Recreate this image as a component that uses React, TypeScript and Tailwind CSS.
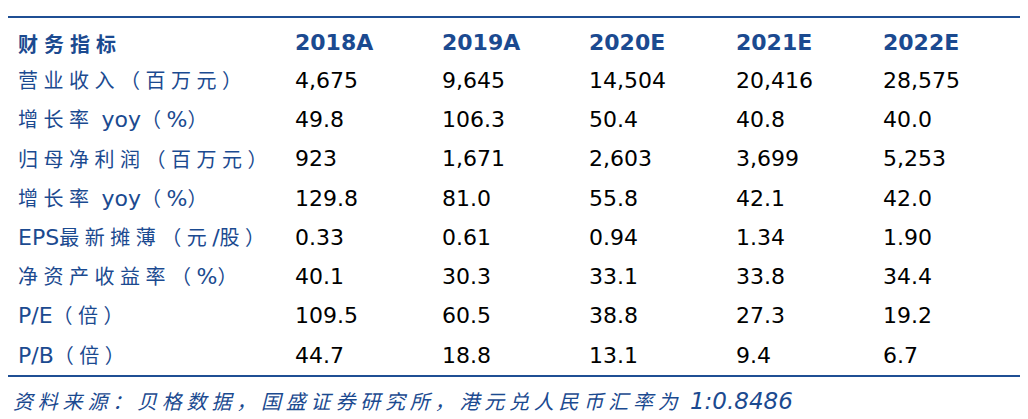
const HEAD = ["2018A", "2019A", "2020E", "2021E", "2022E"];

const ROWS: [string, string[]][] = [
  ["营业收入（百万元）", ["4,675", "9,645", "14,504", "20,416", "28,575"]],
  ["增长率 yoy（%）", ["49.8", "106.3", "50.4", "40.8", "40.0"]],
  ["归母净利润（百万元）", ["923", "1,671", "2,603", "3,699", "5,253"]],
  ["增长率 yoy（%）", ["129.8", "81.0", "55.8", "42.1", "42.0"]],
  ["EPS最新摊薄（元/股）", ["0.33", "0.61", "0.94", "1.34", "1.90"]],
  ["净资产收益率（%）", ["40.1", "30.3", "33.1", "33.8", "34.4"]],
  ["P/E（倍）", ["109.5", "60.5", "38.8", "27.3", "19.2"]],
  ["P/B（倍）", ["44.7", "18.8", "13.1", "9.4", "6.7"]],
];

const FONT = "[font-family:'DejaVu_Sans','Noto_Sans_CJK_SC',sans-serif]";

// CJK runs get wider spacing than latin runs, like the source document
function Label({ text, spacing, latin = "text-[22px]" }: { text: string; spacing: string; latin?: string }) {
  const parts = text.split(/([\u3000-\u9fff\uff00-\uffef]+)/).filter(Boolean);
  return (
    <>
      {parts.map((p, i) =>
        /[\u3000-\u9fff\uff00-\uffef]/.test(p) ? (
          <span key={i} className={`text-[20px] ${spacing} [font-family:'Noto_Sans_CJK_SC',sans-serif]`}>
            {p}
          </span>
        ) : (
          <span key={i} className={latin}>{p}</span>
        ),
      )}
    </>
  );
}

export default function App() {
  return (
    <div className={`h-[419px] w-[1028px] bg-white ${FONT}`}>
      <div className="ml-[8px] mt-[16px] w-[1012px] border-t-2 border-b-2 border-[#1f4f94]">
        {/* header */}
        <div className="grid h-[43px] grid-cols-[277px_147px_147px_147px_147px_147px] items-end pb-[2px] pl-[10px]">
          <div className="text-[20px] font-bold tracking-[6px] text-[#1b4a90] [font-family:'Noto_Sans_CJK_SC',sans-serif]">
            财务指标
          </div>
          {HEAD.map((h) => (
            <div key={h} className="text-[22px] font-bold text-[#1b4a90]">
              {h}
            </div>
          ))}
        </div>

        {ROWS.map(([label, vals], r) => (
          <div
            key={r}
            className="grid h-[39.3px] grid-cols-[277px_147px_147px_147px_147px_147px] items-center pl-[10px]"
          >
            <div className="whitespace-nowrap leading-none text-[#1b4a90]">
              <Label text={label} spacing="tracking-[5.5px]" />
            </div>
            {vals.map((v, i) => (
              <div key={i} className="text-[22px] leading-none text-black">
                {v}
              </div>
            ))}
          </div>
        ))}
      </div>

      <div className="mt-[7px] whitespace-nowrap pl-[13px] italic text-[#1b4a90]">
        <Label
          text="资料来源：贝格数据，国盛证券研究所，港元兑人民币汇率为 1:0.8486"
          spacing="tracking-[4.8px]"
          latin="text-[23px]"
        />
      </div>
    </div>
  );
}
